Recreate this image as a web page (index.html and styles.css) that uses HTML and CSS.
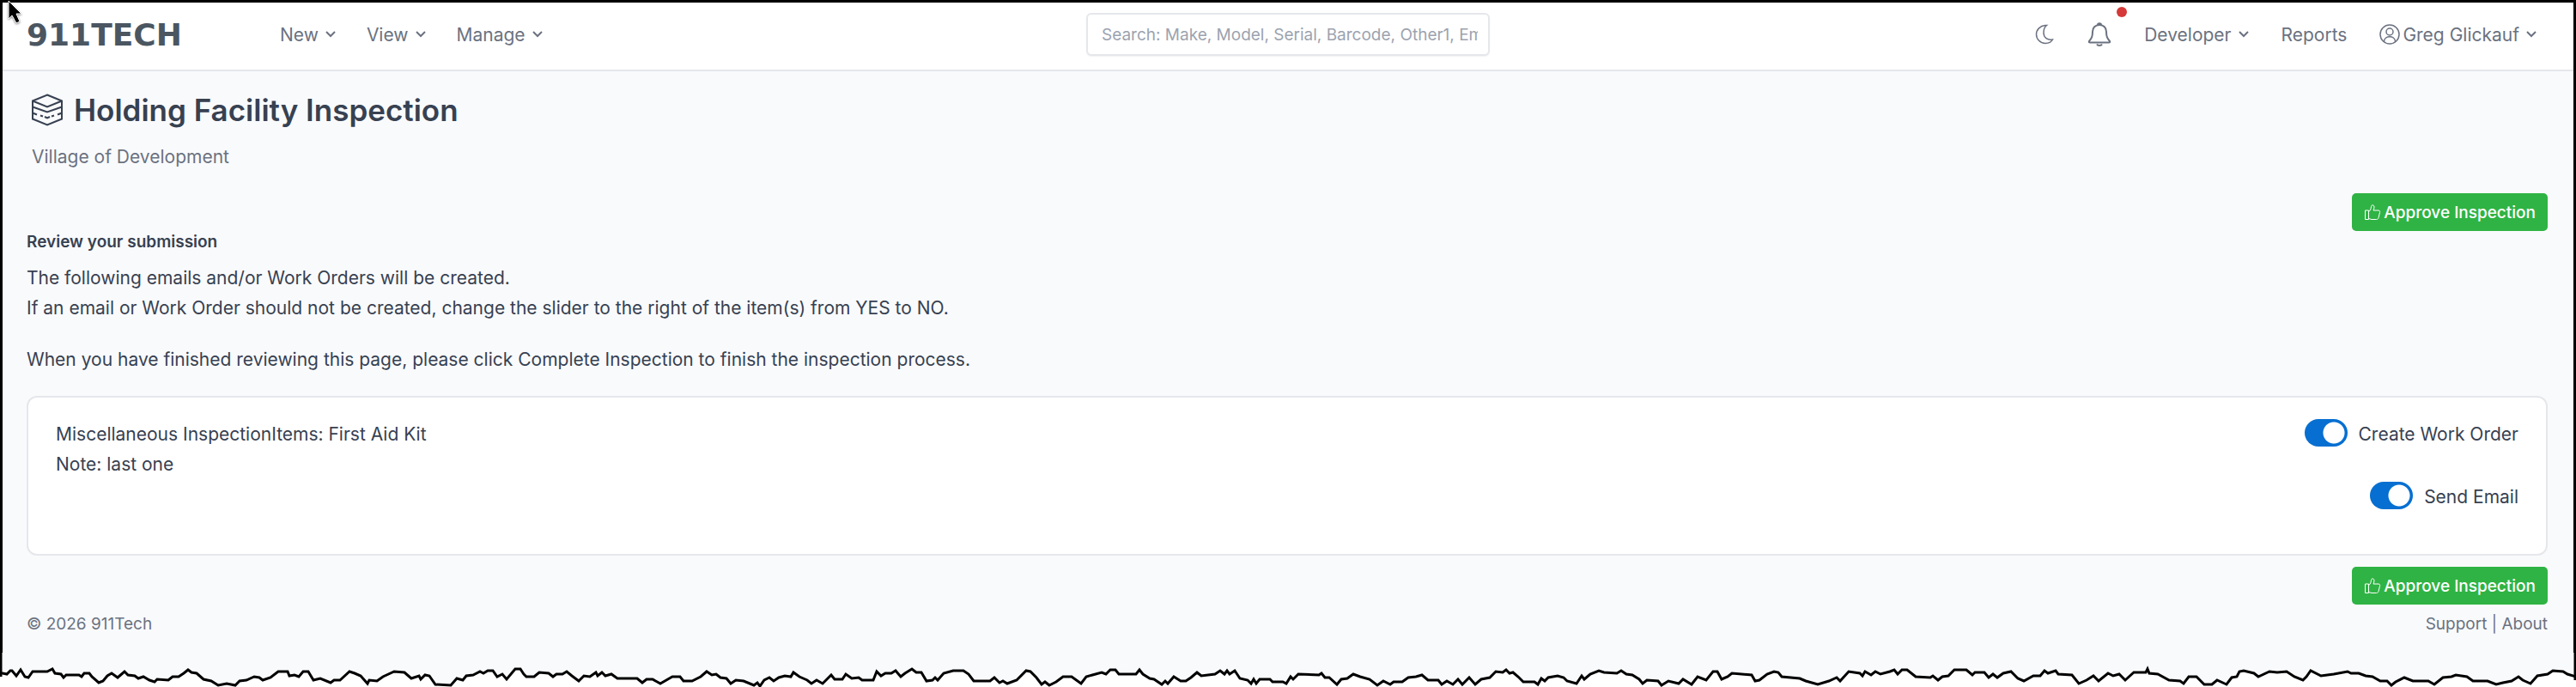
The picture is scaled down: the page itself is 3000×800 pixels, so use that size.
FILE: index.html
```html
<!DOCTYPE html>
<html lang="en">
<head>
    <meta charset="UTF-8">
    <meta name="viewport" content="width=device-width, initial-scale=1.0">
    <title>Holding Facility Inspection</title>
    <link rel="stylesheet" href="styles.css">
</head>
<body>

    <svg class="pointer" viewBox="0 0 18 30" aria-hidden="true">
        <path d="M2 1v21l4-4 5 9 4-2-4-9h6z"/>
    </svg>

    <div class="page">
        <header class="navbar">
            <div class="navbar-side">
                <a href="#" class="brand">911TECH</a>
                <nav class="menu">
                    <a href="#">New <svg class="chevron" viewBox="0 0 12 8"><path d="M1 1l5 5 5-5"/></svg></a>
                    <a href="#">View <svg class="chevron" viewBox="0 0 12 8"><path d="M1 1l5 5 5-5"/></svg></a>
                    <a href="#">Manage <svg class="chevron" viewBox="0 0 12 8"><path d="M1 1l5 5 5-5"/></svg></a>
                </nav>
            </div>

            <input type="text" class="search" aria-label="Search" placeholder="Search: Make, Model, Serial, Barcode, Other1, Employee">

            <div class="navbar-side navbar-end">
                <button type="button" class="icon-button" aria-label="Dark mode">
                    <svg class="icon" viewBox="0 0 24 24"><path d="M13 1.500C7 2 2.500 6.500 2.500 12S7 22.500 13 22.500c4 0 7-1.500 8.500-4.500-6 1-10.500-2-10.500-8 0-3.500 1-6.500 3.500-8.500z"/></svg>
                </button>
                <button type="button" class="icon-button" aria-label="Notifications">
                    <svg class="icon icon-bell" viewBox="0 0 28 28"><path d="M14 3c-5 0-8 3.500-8 8 0 6-1.500 8-4 11-.5 1 0 1.500 1 1.500h22c1 0 1.500-.5 1-1.500-2.500-3-4-5-4-11 0-4.500-3-8-8-8zM12 3c0-2.500 4-2.500 4 0M11 25.500c1 2 5 2 6 0"/></svg>
                    <span class="badge"></span>
                </button>
                <nav class="menu">
                    <a href="#">Developer <svg class="chevron" viewBox="0 0 12 8"><path d="M1 1l5 5 5-5"/></svg></a>
                    <a href="#">Reports</a>
                    <a href="#"><svg class="icon icon-user" viewBox="0 0 24 24"><circle cx="12" cy="12" r="11"/><circle cx="12" cy="9" r="4"/><path d="M5.500 20c.5-7 12.500-7 13 0"/></svg>Greg Glickauf <svg class="chevron" viewBox="0 0 12 8"><path d="M1 1l5 5 5-5"/></svg></a>
                </nav>
            </div>
        </header>

        <main class="content">
            <h1 class="title">
                <svg class="icon-stack" viewBox="0 0 38 38"><path d="M19 1.500L36 8.500v21L19 36.500l-17-7v-21zM2 8.500l17 7 17-7M2 15.500l17 6 17-6M2 22.500l5 2M11 25.500l3 1M16 27l3 1.500 3-1.500M24 26.500l3-1M31 24.500l5-2"/></svg>
                Holding Facility Inspection
            </h1>
            <div class="subtitle">Village of Development</div>

            <div class="actions">
                <button type="button" class="btn-approve"><svg viewBox="0 0 20 20"><path d="M1.500 8h4v10.500h-4zM5.500 9.500C8 8 8 6 8.500 3.500c.3-2.500 3.500-2 3.500.5 0 1.500-.5 3-1 4h6c1.500 0 2 1.500 1.500 2.500l-1.500 6c-.5 1.500-1 2-2.500 2H9l-3.500-1"/></svg>Approve Inspection</button>
            </div>

            <h2 class="heading">Review your submission</h2>
            <p>The following emails and/or Work Orders will be created.<br>
            If an email or Work Order should not be created, change the slider to the right of the item(s) from YES to NO.</p>
            <p>When you have finished reviewing this page, please click Complete Inspection to finish the inspection process.</p>

            <section class="card">
                <div>
                    Miscellaneous InspectionItems: First Aid Kit<br>
                    Note: last one
                </div>
                <div class="switches">
                    <label class="switch"><input type="checkbox" checked>Create Work Order</label>
                    <label class="switch"><input type="checkbox" checked>Send Email</label>
                </div>
            </section>

            <div class="actions">
                <button type="button" class="btn-approve"><svg viewBox="0 0 20 20"><path d="M1.500 8h4v10.500h-4zM5.500 9.500C8 8 8 6 8.500 3.500c.3-2.500 3.500-2 3.500.5 0 1.500-.5 3-1 4h6c1.500 0 2 1.500 1.500 2.500l-1.500 6c-.5 1.500-1 2-2.500 2H9l-3.500-1"/></svg>Approve Inspection</button>
            </div>
        </main>

        <footer class="footer">
            <div>© 2026 911Tech</div>
            <div><a href="#">Support</a> | <a href="#">About</a></div>
        </footer>
    </div>

    <!-- Torn paper edge -->
    <svg class="torn-edge" viewBox="0 0 3000 40" preserveAspectRatio="none" aria-hidden="true">
        <path class="torn-paper" d="M0 0V24L3 24 8 25 12 21 14 21 19 27 24 20 29 28 33 29 38 22 55 22 61 19 64 24 71 25 74 29 77 26 92 26 95 28 98 24 104 24 107 28 115 35 120 33 125 27 130 24 137 29 145 22 149 26 157 27 161 30 167 28 174 32 180 34 183 31 196 32 201 28 208 28 214 24 219 20 223 23 229 24 237 31 246 33 254 38 264 36 274 38 279 33 287 32 296 28 302 29 306 32 315 29 324 22 335 22 337 27 343 26 348 28 353 22 359 22 365 32 373 30 385 35 389 32 396 32 407 22 413 24 420 27 428 36 430 32 439 33 446 28 459 22 471 23 479 30 488 27 490 31 495 26 500 27 507 37 525 38 532 30 539 32 543 27 551 26 559 22 563 24 568 21 574 21 579 28 585 25 590 31 600 19 606 19 610 25 613 28 622 28 628 23 639 24 644 28 648 25 655 25 660 22 666 27 674 33 680 27 687 28 694 23 696 27 701 23 705 27 712 25 719 30 742 30 748 35 753 31 760 31 769 36 776 32 783 28 792 28 796 33 806 33 816 28 823 22 829 26 834 25 839 29 846 30 851 36 857 32 866 33 878 38 882 35 885 39 890 32 896 29 901 33 907 29 914 27 921 28 924 23 931 28 940 32 945 36 951 32 958 36 968 26 972 31 981 31 985 25 992 30 1000 29 1004 32 1017 32 1021 22 1026 27 1031 24 1038 24 1043 21 1049 28 1054 24 1062 19 1067 23 1073 23 1079 33 1086 32 1089 29 1092 32 1099 24 1110 21 1122 21 1128 25 1134 33 1153 33 1158 29 1164 35 1168 33 1173 36 1184 32 1195 21 1200 22 1207 29 1213 37 1217 34 1222 38 1230 34 1238 28 1248 28 1259 36 1265 28 1283 23 1288 25 1293 20 1299 20 1303 25 1323 25 1327 20 1331 25 1339 30 1344 31 1353 37 1357 33 1360 36 1367 28 1375 33 1381 33 1387 29 1394 23 1399 27 1415 25 1421 21 1426 25 1429 21 1432 25 1438 21 1444 30 1453 32 1457 36 1460 31 1463 36 1467 31 1479 31 1482 34 1494 34 1498 36 1503 28 1506 31 1512 25 1536 26 1539 24 1543 29 1548 29 1557 37 1562 31 1569 30 1576 25 1584 28 1595 31 1604 38 1611 33 1619 37 1623 34 1633 34 1640 29 1649 28 1656 26 1663 32 1675 32 1679 37 1685 33 1692 37 1698 31 1703 37 1711 29 1718 37 1725 31 1735 29 1742 22 1750 23 1754 20 1758 24 1762 23 1768 28 1774 34 1787 34 1791 37 1795 30 1799 33 1803 29 1814 27 1821 29 1825 33 1836 36 1842 27 1845 31 1852 25 1862 21 1868 23 1883 24 1888 21 1894 25 1901 26 1909 31 1913 36 1918 32 1931 33 1935 38 1943 33 1955 36 1960 31 1970 37 1977 28 1987 32 1995 22 2000 22 2005 31 2012 28 2017 24 2040 26 2044 33 2049 32 2058 25 2066 22 2071 23 2075 28 2096 30 2103 33 2117 37 2130 33 2139 29 2143 33 2153 22 2166 24 2169 27 2172 22 2179 26 2184 22 2190 25 2201 22 2206 20 2210 25 2215 20 2221 20 2231 28 2248 29 2251 27 2257 32 2262 28 2269 27 2276 20 2290 20 2297 26 2300 23 2311 23 2316 29 2321 25 2326 29 2333 24 2342 22 2350 30 2357 33 2368 27 2376 27 2381 21 2385 24 2394 21 2397 25 2413 26 2421 36 2430 32 2438 27 2444 33 2455 24 2461 27 2468 25 2475 32 2485 23 2499 23 2501 19 2503 24 2513 25 2526 32 2539 33 2543 36 2549 28 2558 28 2567 37 2576 37 2582 32 2593 37 2599 29 2605 28 2608 22 2613 21 2625 24 2630 28 2643 22 2652 23 2663 22 2672 28 2682 32 2686 28 2691 21 2703 27 2718 25 2734 22 2738 24 2747 24 2755 27 2763 28 2772 33 2780 33 2785 38 2790 34 2800 29 2810 33 2828 33 2835 37 2845 29 2855 28 2860 26 2873 28 2880 33 2897 33 2907 37 2915 35 2925 33 2933 28 2938 32 2947 36 2955 27 2967 25 2973 21 2985 22 2990 25 3000 28V0"/>
        <path class="torn-side" d="M1 0V28M2999 0V32"/>
    </svg>

</body>
</html>
```
FILE: styles.css
```css
* {
    box-sizing: border-box;
}

body {
    margin: 0;
    font-family: Inter, "Liberation Sans", sans-serif;
    font-size: 21px;
    line-height: 35px;
    color: #374151;
    background-color: #ffffff;
}

a {
    color: inherit;
    text-decoration: none;
}

svg {
    fill: none;
    stroke: currentColor;
}

.pointer {
    position: absolute;
    top: 0;
    left: 8px;
    width: 18px;
    height: 30px;
    fill: #000000;
    stroke: #ffffff;
    filter: drop-shadow(0 1px 1px rgba(0, 0, 0, 0.5));
}

.page {
    display: flex;
    flex-direction: column;
    min-height: calc(100vh - 40px);
    border: 3px solid #000000;
    border-bottom: none;
    background-color: #f9fafc;
}

/* Navbar */
.navbar {
    display: flex;
    align-items: center;
    height: 80px;
    padding: 0 28px 4px;
    background-color: #ffffff;
    border-bottom: 2px solid #e5e7eb;
    color: #6b7280;
}

.navbar-side {
    display: flex;
    align-items: center;
    flex: 1;
}

.navbar-end {
    justify-content: flex-end;
    gap: 38px;
}

.navbar-end .menu {
    gap: 38px;
    margin-right: 15px;
}

.brand {
    width: 295px;
    font-family: "DejaVu Sans", sans-serif;
    font-size: 36px;
    font-weight: bold;
    color: #4b5661;
}

.menu {
    display: flex;
    gap: 36px;
}

.menu a {
    display: flex;
    align-items: center;
}

.chevron {
    width: 12px;
    height: 8px;
    margin-left: 8px;
    stroke-width: 2;
}

.search {
    width: 470px;
    height: 50px;
    padding: 0 12px 0 16px;
    border: 2px solid #e5e7eb;
    border-radius: 6px;
    font: inherit;
    font-size: 19px;
    box-shadow: 0 1px 2px rgba(0, 0, 0, 0.06);
}

.search::placeholder {
    color: #9ca3af;
}

.icon-button {
    position: relative;
    display: flex;
    padding: 0;
    border: none;
    background: none;
    color: inherit;
    cursor: pointer;
}

.icon {
    width: 24px;
    height: 24px;
    stroke-width: 1.5;
}

.icon-bell {
    width: 28px;
    height: 28px;
    stroke-width: 2;
}

.icon-user {
    margin-right: 3px;
}

.badge {
    position: absolute;
    top: -18px;
    right: -18px;
    width: 12px;
    height: 12px;
    border-radius: 50%;
    background-color: #d63939;
}

/* Content */
.content {
    padding: 20px 30px 0 28px;
}

.title {
    display: flex;
    align-items: center;
    gap: 12px;
    margin: 0;
    padding-left: 5px;
    font-size: 35px;
    line-height: 50px;
    font-weight: 600;
}

.icon-stack {
    width: 38px;
    height: 38px;
    stroke-width: 2;
}

.subtitle {
    margin: 12px 0 25px;
    padding-left: 6px;
    color: #6b7280;
}

.actions {
    display: flex;
    justify-content: flex-end;
}

.btn-approve {
    display: flex;
    align-items: center;
    gap: 3px;
    height: 44px;
    padding: 0 14px;
    border: none;
    border-radius: 5px;
    background-color: #2fb344;
    color: #ffffff;
    font: inherit;
    font-size: 19px;
    font-weight: 500;
    cursor: pointer;
}

.btn-approve svg {
    width: 20px;
    height: 20px;
}

.heading {
    margin: 0 0 11px;
    font-size: 19px;
    line-height: 26px;
    font-weight: 600;
}

p {
    margin: 0 0 25px;
}

.card {
    display: flex;
    justify-content: space-between;
    min-height: 186px;
    margin-bottom: 13px;
    padding: 25px 32px;
    border: 2px solid #e5e7eb;
    border-radius: 12px;
    background-color: #ffffff;
}

.switches {
    display: flex;
    flex-direction: column;
    align-items: flex-end;
    gap: 38px;
}

.switch {
    display: flex;
    align-items: flex-start;
    gap: 13px;
}

.switch input {
    appearance: none;
    width: 50px;
    height: 32px;
    margin: 0;
    border-radius: 16px;
    background: #066fd1 radial-gradient(circle at 34px 16px, #ffffff 12px, #066fd1 13px);
}

/* Footer */
.footer {
    display: flex;
    justify-content: space-between;
    padding: 5px 30px 0 28px;
    font-size: 19px;
    color: #6b7280;
}

.torn-edge {
    display: block;
    width: 100%;
    height: 40px;
}

.torn-paper {
    fill: #f9fafc;
    stroke: #000000;
    stroke-width: 3;
}

.torn-side {
    stroke: #000000;
    stroke-width: 3;
}
```
